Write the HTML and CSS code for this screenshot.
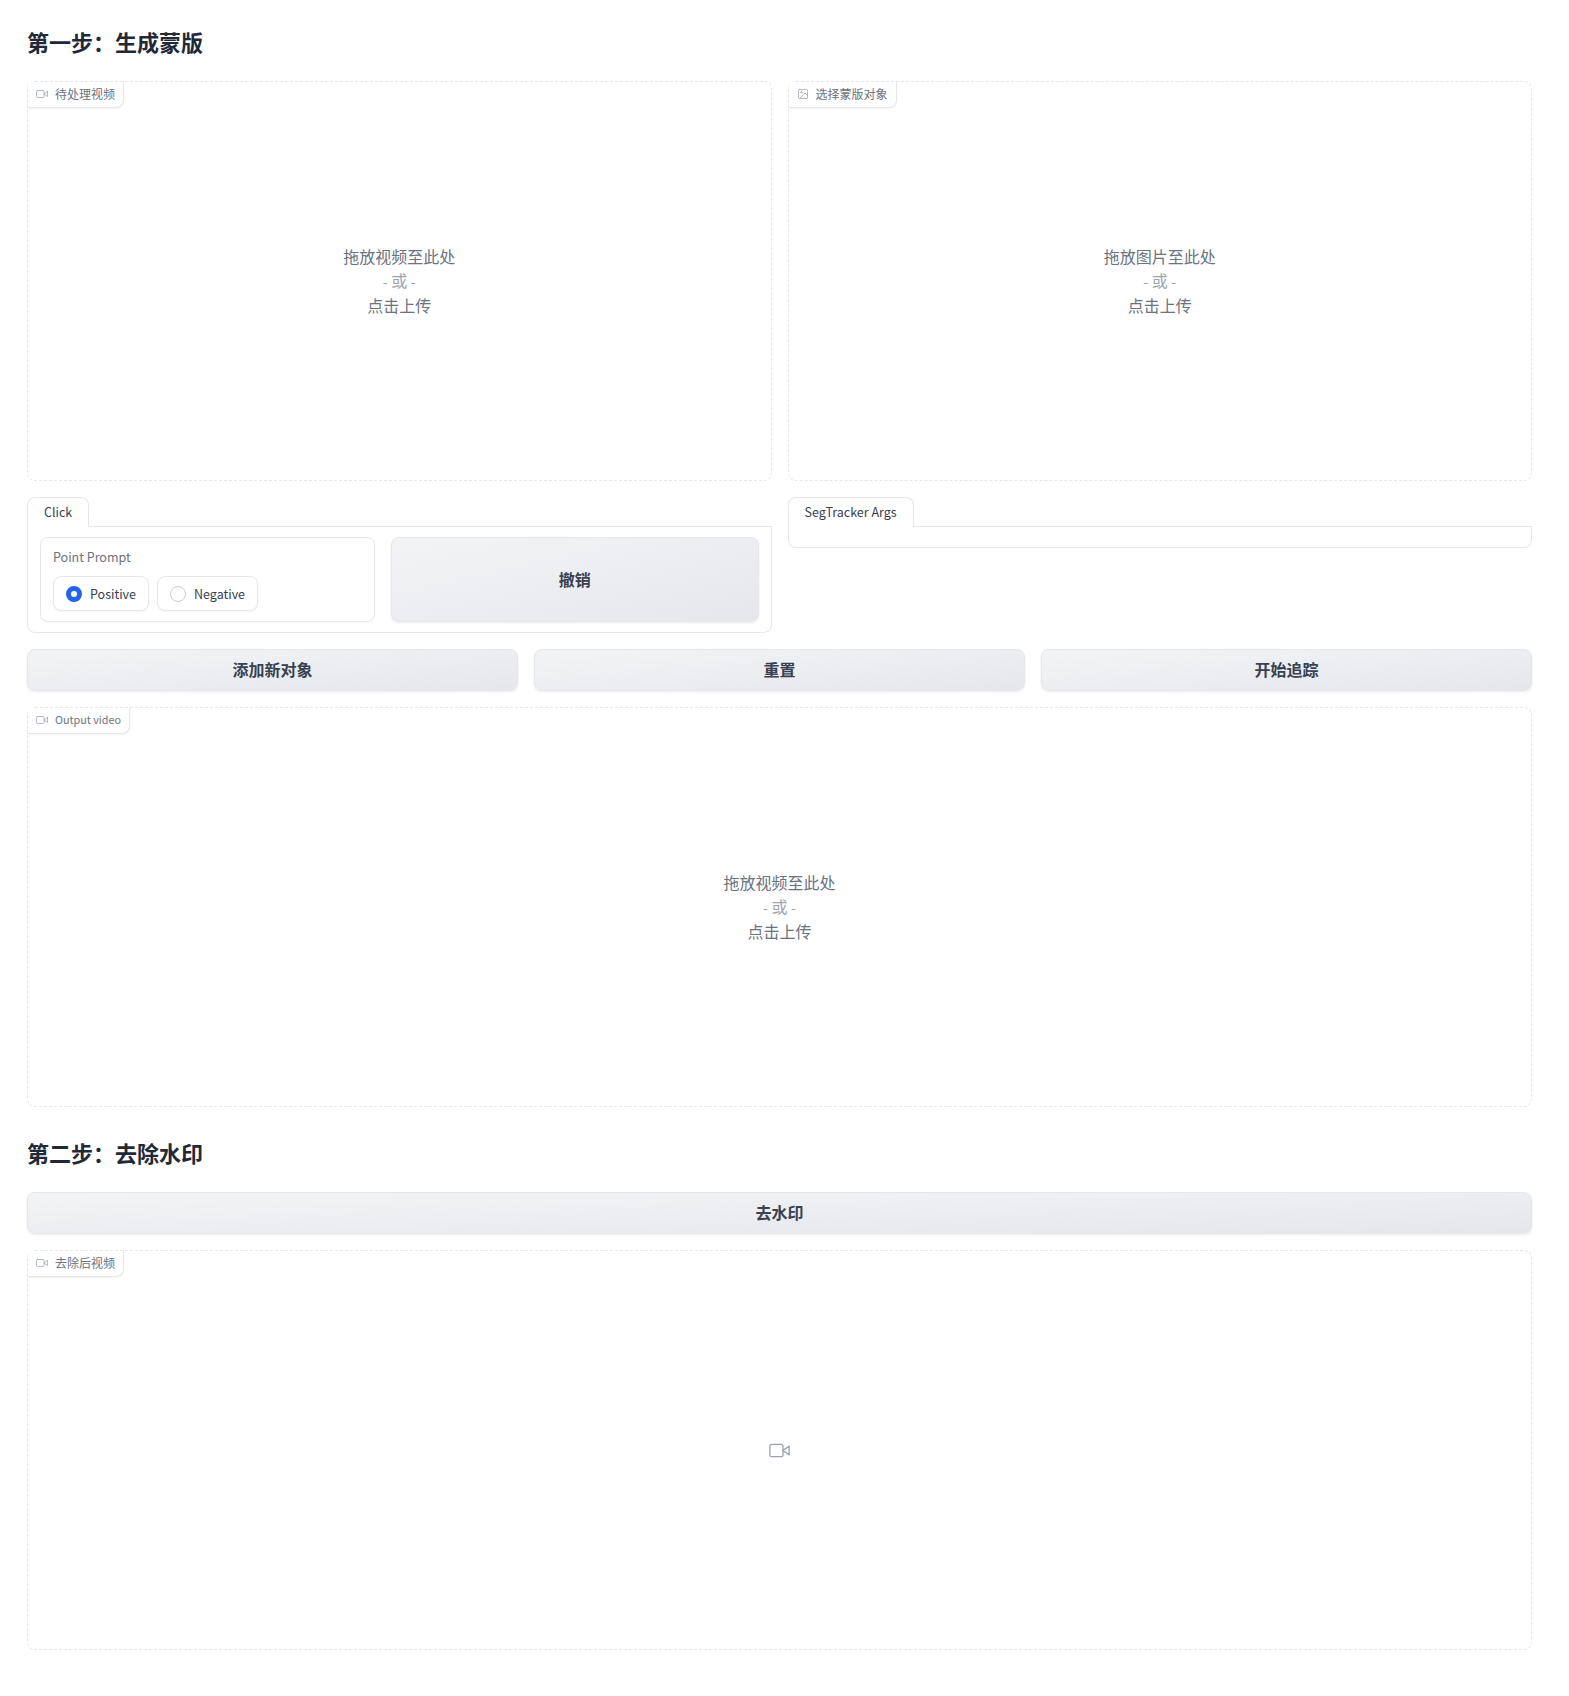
FILE: index.html
```html
<!DOCTYPE html>
<html lang="zh-CN">
<head>
  <meta charset="utf-8">
  <title>视频去水印</title>
  <link rel="stylesheet" href="styles.css">
</head>
<body>

<main class="page">

  <!-- Step 1 -->
  <h2 class="step-title">第一步：生成蒙版</h2>

  <div class="row-two">
    <div class="upload">
      <span class="block-label">
        <svg class="label-icon" viewBox="0 0 24 24"><polygon points="23 7 16 12 23 17 23 7"/><rect x="1" y="5" width="15" height="14" rx="2" ry="2"/></svg>
        待处理视频
      </span>
      <div class="drop-text">拖放视频至此处<span class="or"><span class="dash">-</span> 或 <span class="dash">-</span></span>点击上传</div>
    </div>
    <div class="upload">
      <span class="block-label">
        <svg class="label-icon" viewBox="0 0 24 24"><rect x="3" y="3" width="18" height="18" rx="2" ry="2"/><circle cx="8.5" cy="8.5" r="1.5"/><polyline points="21 15 16 10 5 21"/></svg>
        选择蒙版对象
      </span>
      <div class="drop-text">拖放图片至此处<span class="or"><span class="dash">-</span> 或 <span class="dash">-</span></span>点击上传</div>
    </div>
  </div>

  <div class="row-two">
    <div class="tabs">
      <button class="tab">Click</button>
      <div class="tab-panel click-panel">
        <fieldset class="radio-block">
          <legend class="radio-title">Point Prompt</legend>
          <div class="radio-group">
            <label class="radio-item"><input type="radio" name="prompt" checked>Positive</label>
            <label class="radio-item"><input type="radio" name="prompt">Negative</label>
          </div>
        </fieldset>
        <button class="btn btn-fill">撤销</button>
      </div>
    </div>
    <div class="tabs">
      <button class="tab">SegTracker Args</button>
      <div class="tab-panel"></div>
    </div>
  </div>

  <div class="row-three">
    <button class="btn btn-bar">添加新对象</button>
    <button class="btn btn-bar">重置</button>
    <button class="btn btn-bar">开始追踪</button>
  </div>

  <div class="upload">
    <span class="block-label label-latin">
      <svg class="label-icon" viewBox="0 0 24 24"><polygon points="23 7 16 12 23 17 23 7"/><rect x="1" y="5" width="15" height="14" rx="2" ry="2"/></svg>
      Output video
    </span>
    <div class="drop-text">拖放视频至此处<span class="or"><span class="dash">-</span> 或 <span class="dash">-</span></span>点击上传</div>
  </div>

  <!-- Step 2 -->
  <h2 class="step-title">第二步：去除水印</h2>

  <button class="btn btn-bar">去水印</button>

  <div class="upload">
    <span class="block-label">
      <svg class="label-icon" viewBox="0 0 24 24"><polygon points="23 7 16 12 23 17 23 7"/><rect x="1" y="5" width="15" height="14" rx="2" ry="2"/></svg>
      去除后视频
    </span>
    <svg class="empty-icon" viewBox="0 0 24 24"><polygon points="23 7 16 12 23 17 23 7"/><rect x="1" y="5" width="15" height="14" rx="2" ry="2"/></svg>
  </div>

</main>

</body>
</html>
```

FILE: styles.css
```css
* {
  box-sizing: border-box;
}
body {
  margin: 0;
  background: #fff;
  color: #374151;
  font-family: "Noto Sans CJK SC", "Noto Sans", sans-serif;
  font-size: 14px;
}
.page {
  width: 1505px;
  margin-left: 27px;
  padding-top: 12px;
  display: flex;
  flex-direction: column;
  gap: 16px;
}
.step-title {
  margin: 0;
  padding: 14px 0 9px;
  font-size: 22px;
  line-height: 30px;
  font-weight: 600;
  color: #1f2937;
}
.row-two {
  display: grid;
  grid-template-columns: 1fr 1fr;
  gap: 16px;
  align-items: start;
}
.row-three {
  display: grid;
  grid-template-columns: 1fr 1fr 1fr;
  gap: 16px;
}

/* Upload blocks */
.upload {
  position: relative;
  height: 400px;
  display: flex;
  align-items: center;
  justify-content: center;
  border: 1px dashed #e5e7eb;
  border-radius: 8px;
}
.block-label {
  position: absolute;
  top: 0;
  left: 0;
  display: flex;
  align-items: center;
  gap: 7px;
  padding: 4px 8px 5px;
  font-size: 12px;
  line-height: 16px;
  color: #6b7280;
  background: #fff;
  border-right: 1px solid #e5e7eb;
  border-bottom: 1px solid #e5e7eb;
  border-radius: 0 0 8px 0;
  box-shadow: 0 1px 2px rgba(0,0,0,0.05);
}
.label-latin {
  font-size: 10.75px;
}
.label-icon, .empty-icon {
  fill: none;
  stroke: #9ca3af;
  stroke-width: 1.5;
  stroke-linecap: round;
  stroke-linejoin: round;
}
.label-icon {
  width: 12px;
  height: 12px;
}
.empty-icon {
  width: 21px;
  height: 21px;
}
.drop-text {
  padding-bottom: 2px;
  font-size: 16px;
  line-height: 24px;
  text-align: center;
  color: #6b7280;
}
.or {
  display: block;
  color: #9ca3af;
}
.dash {
  font-size: 14px;
}

/* Tabs */
.tab {
  display: block;
  position: relative;
  height: 30px;
  margin-bottom: -1px;
  padding: 0 16px 2px;
  font: inherit;
  font-size: 12.5px;
  line-height: 26px;
  color: #374151;
  background: #fff;
  border: 1px solid #e5e7eb;
  border-bottom: none;
  border-radius: 8px 8px 0 0;
}
.tab-panel {
  min-height: 22px;
  padding: 10px 12px;
  border: 1px solid #e5e7eb;
  border-radius: 0 0 8px 8px;
}
.click-panel {
  display: flex;
  gap: 16px;
}

/* Radio */
.radio-block {
  width: 335px;
  margin: 0;
  padding: 10px 12px;
  flex: none;
  border: 1px solid #e5e7eb;
  border-radius: 8px;
  box-shadow: 0 1px 2px rgba(0,0,0,0.03);
}
.radio-title {
  float: left;
  width: 100%;
  margin-bottom: 10px;
  padding: 0;
  font-size: 12.5px;
  line-height: 18px;
  color: #6b7280;
}
.radio-group {
  clear: both;
  display: flex;
  gap: 8px;
}
.radio-item {
  display: flex;
  align-items: center;
  gap: 8px;
  height: 35px;
  padding: 0 12px;
  font-size: 12.5px;
  line-height: 21px;
  color: #374151;
  background: #fff;
  border: 1px solid #e5e7eb;
  border-radius: 8px;
  box-shadow: 0 1px 2px rgba(0,0,0,0.05);
}
.radio-item input {
  appearance: none;
  width: 16px;
  height: 16px;
  margin: 0;
  background: #fff;
  border: 1px solid #c8ccd2;
  border-radius: 50%;
}
.radio-item input:checked {
  background: #fff;
  border: 5px solid #2563eb;
}

/* Buttons */
.btn {
  padding: 0 0 2px;
  font: inherit;
  font-size: 16px;
  font-weight: 600;
  color: #374151;
  background: linear-gradient(to bottom right, #f3f4f6, #e5e7eb);
  border: 1px solid #e5e7eb;
  border-radius: 8px;
  box-shadow: 0 1px 3px rgba(0,0,0,0.08);
}
.btn-bar {
  height: 42px;
}
.btn-fill {
  flex: 1;
}
```
